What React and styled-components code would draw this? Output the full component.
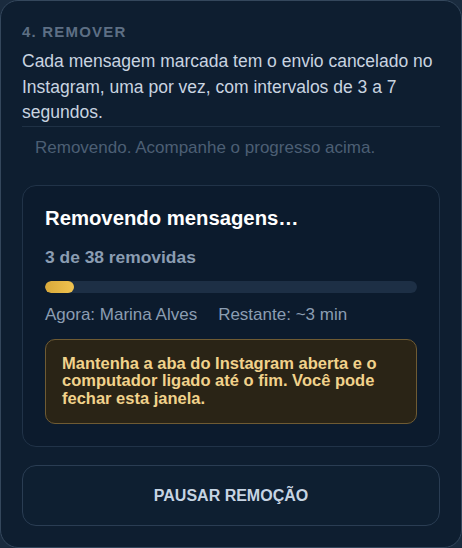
import React from "react";
import styled, { createGlobalStyle } from "styled-components";

const Global = createGlobalStyle`
  html, body { margin: 0; padding: 0; background: #1a2b3e; }
  body { font-family: "Liberation Sans", Arial, sans-serif; }
  #root { width: 462px; height: 548px; }
`;

const Panel = styled.section`
  box-sizing: border-box;
  width: 462px;
  height: 548px;
  background: #0e1e30;
  border: 1px solid #34475c;
  border-radius: 18px;
  padding: 22px 21px 0 21px;
  display: flex;
  flex-direction: column;
  color: #c8d3df;
`;

const StepTitle = styled.h2`
  margin: 0;
  font-size: 15px;
  font-weight: 700;
  letter-spacing: 1.2px;
  text-transform: uppercase;
  color: #5d6f84;
  line-height: normal;
`;

const Description = styled.p`
  margin: 9px 0 0 0;
  font-size: 17.5px;
  line-height: 25.6px;
  color: #c9d4e0;
  border-bottom: 1px solid #1f3145;
`;

const Status = styled.div`
  padding: 11px 13px 0 13px;
  font-size: 17px;
  line-height: normal;
  color: #4c5f74;
`;

const Card = styled.div`
  margin-top: 27px;
  border: 1px solid #213348;
  border-radius: 14px;
  background: #0c1b2d;
  padding: 21px 22px 22px 22px;
  display: flex;
  flex-direction: column;
`;

const CardTitle = styled.h3`
  margin: 0;
  font-size: 20.3px;
  font-weight: 700;
  color: #ffffff;
  line-height: 23px;
`;

const Counter = styled.div`
  margin-top: 17px;
  font-size: 17.4px;
  font-weight: 700;
  color: #8b9db2;
  line-height: normal;
`;

const Track = styled.div`
  margin-top: 13px;
  height: 12px;
  border-radius: 6px;
  background: #1d2f45;
  overflow: hidden;
`;

const Fill = styled.div`
  height: 100%;
  border-radius: 6px;
  background: linear-gradient(90deg, #d9a93a, #f0c350);
`;

const Meta = styled.div`
  margin-top: 12px;
  display: flex;
  gap: 21px;
  font-size: 17px;
  color: #8b9db2;
  line-height: normal;
`;

const Warning = styled.div`
  margin-top: 14px;
  border: 1px solid #6f5b33;
  border-radius: 10px;
  background: #2a2416;
  padding: 15px 16px 16px 16px;
  font-size: 16.5px;
  font-weight: 700;
  line-height: 17.5px;
  color: #f1d28b;
`;

const PauseButton = styled.button`
  margin-top: 18px;
  height: 61px;
  border: 1px solid #2a3d53;
  border-radius: 14px;
  background: #0e1f31;
  color: #c6d4e3;
  font-family: "Liberation Sans", Arial, sans-serif;
  font-size: 16px;
  font-weight: 700;
  text-transform: uppercase;
  cursor: pointer;
`;

export default function App() {
  const done = 3;
  const total = 38;
  return (
    <>
      <Global />
      <Panel>
        <StepTitle>4. Remover</StepTitle>
        <Description>
          Cada mensagem marcada tem o envio cancelado no Instagram, uma por vez, com intervalos de 3 a 7 segundos.
        </Description>
        <Status>Removendo. Acompanhe o progresso acima.</Status>
        <Card>
          <CardTitle>Removendo mensagens…</CardTitle>
          <Counter>{done} de {total} removidas</Counter>
          <Track>
            <Fill style={{ width: `${(done / total) * 100}%` }} />
          </Track>
          <Meta>
            <span>Agora: Marina Alves</span>
            <span>Restante: ~3 min</span>
          </Meta>
          <Warning>
            Mantenha a aba do Instagram aberta e o computador ligado até o fim. Você pode fechar esta janela.
          </Warning>
        </Card>
        <PauseButton>Pausar remoção</PauseButton>
      </Panel>
    </>
  );
}
